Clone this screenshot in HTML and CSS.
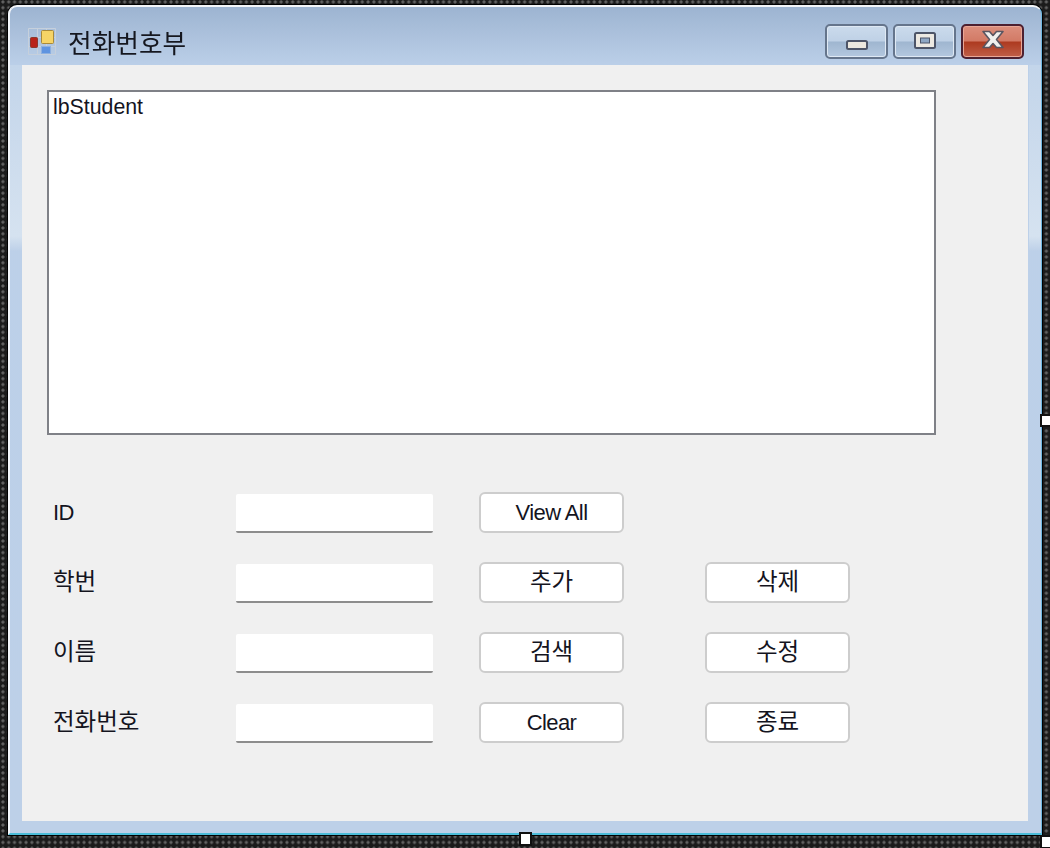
FILE: index.html
```html
<!DOCTYPE html>
<html lang="ko">
<head>
<meta charset="utf-8">
<title>전화번호부</title>
<link rel="stylesheet" href="styles.css">
</head>
<body>
<div class="window">
  <header class="titlebar">
    <svg class="app-icon" width="28" height="27" viewBox="0 0 28 27">
      <path d="M0.500 0.500H27.500V26.500H0.500ZM0.500 9.500H27.500M0.500 18.500H27.500M9.500 0.500V26.500M18.500 0.500V26.500" stroke="#c6d0dc" stroke-width="1" fill="none"/>
      <rect x="2.500" y="9.500" width="7" height="10" rx="1" fill="#b8231a" stroke="#8a3a30"/>
      <rect x="13.500" y="2.500" width="12" height="13" rx="1" fill="#f6d466" stroke="#a98a3a"/>
      <rect x="13.500" y="18.500" width="9" height="7" fill="#5f94e0" stroke="#8db0e0"/>
    </svg>
    <span class="title">전화번호부</span>
    <div class="caption-buttons">
      <div class="cap-btn cap-min">
        <svg width="22" height="10" viewBox="0 0 22 10"><rect x="1" y="1" width="20" height="8" rx="1.500" fill="#ece8df" stroke="#4d5568" stroke-width="2"/></svg>
      </div>
      <div class="cap-btn cap-max">
        <svg width="22" height="17" viewBox="0 0 22 17"><rect x="1" y="1" width="20" height="15" rx="1.500" fill="#ece9e2" stroke="#4d5568" stroke-width="2"/><rect x="6.500" y="6" width="9" height="5" fill="#8ea7c4" stroke="#4d5568"/></svg>
      </div>
      <div class="cap-btn cap-close">
        <svg width="24" height="19" viewBox="0 0 24 19"><path d="M2 1.500H8.500L12 5.500L15.500 1.500H22L15.500 9.500L22 17.500H15.500L12 13.500L8.500 17.500H2L8.500 9.500Z" fill="#f1f0ee" stroke="#5a5560" stroke-width="1.600" stroke-linejoin="round"/></svg>
      </div>
    </div>
  </header>
  <main class="client">
    <div class="listbox">lbStudent</div>
    <div class="form">
      <span class="label latin">ID</span>
      <div class="field"></div>
      <div class="btn btn-a latin">View All</div>
      <div class="spacer"></div>

      <span class="label ko">학번</span>
      <div class="field"></div>
      <div class="btn btn-a ko">추가</div>
      <div class="btn btn-b ko">삭제</div>

      <span class="label ko">이름</span>
      <div class="field"></div>
      <div class="btn btn-a ko">검색</div>
      <div class="btn btn-b ko">수정</div>

      <span class="label ko">전화번호</span>
      <div class="field"></div>
      <div class="btn btn-a latin">Clear</div>
      <div class="btn btn-b ko">종료</div>
    </div>
  </main>
</div>
<div class="handle handle-right"></div>
<div class="handle handle-bottom"></div>
<div class="handle handle-corner"></div>
</body>
</html>
```

FILE: styles.css
```css
* { box-sizing: border-box; }

html, body {
  margin: 0;
  height: 848px;
  overflow: hidden;
}

body {
  position: relative;
  padding: 5px 8px 13px;
  background-color: #1b1b1b;
  background-image: radial-gradient(circle, #636363 1.300px, transparent 1.800px);
  background-size: 5.800px 5.800px;
  background-position: 0 -1px;
  font-family: "Liberation Sans", "Noto Sans CJK KR", sans-serif;
  color: #14141e;
}

.window {
  width: 1034px;
  height: 830px;
  padding: 0 13px 12px 12px;
  display: flex;
  flex-direction: column;
  background:
    linear-gradient(#c3d5ea, #d5e2f0 92%, #bdd0e8) left 58px / 12px 186px no-repeat,
    linear-gradient(#c3d5ea, #d5e2f0 92%, #bdd0e8) right 58px / 12px 186px no-repeat,
    linear-gradient(#9db4d1 0, #bcd0e9 60px, #bdd0e8 100%);
  border-top: 2px solid #f3f5f8;
  border-left: 2px solid #f4f7fb;
  border-right: 1px solid #6fb7e0;
  border-bottom: 2px solid #4bbcd8;
  border-radius: 9px 9px 0 0;
  box-shadow: 0 0 0 1px #000;
  filter: blur(0.450px);
}

.titlebar {
  height: 58px;
  flex: none;
  display: flex;
  align-items: center;
  padding: 11px 4px 0 6px;
}

.app-icon { flex: none; }

.title {
  font-size: 25.700px;
  margin-left: 12px;
  margin-top: -1px;
  color: #15171f;
}

.caption-buttons {
  margin-left: auto;
  display: flex;
  gap: 5px;
}

.cap-btn {
  width: 63px;
  height: 35px;
  display: flex;
  align-items: center;
  justify-content: center;
  border: 2px solid #65758c;
  border-radius: 5px;
  background: linear-gradient(#cbdbec 0, #bfd1e6 48%, #9fb6d0 52%, #b4c8df 100%);
  box-shadow: inset 0 0 0 1px #dfe9f4;
}

.cap-min { padding-top: 6px; }
.cap-max { padding-bottom: 3px; }

.cap-close {
  border-color: #4d2030;
  background: linear-gradient(#dc8f7d 0, #d27a66 48%, #ad3a20 52%, #bf5f48 100%);
  box-shadow: inset 0 0 0 1px #e9a797;
  padding-bottom: 4px;
}

.client {
  flex: 1;
  background: #f0f0f0;
  padding: 25px 25px 0;
}

.listbox {
  width: 889px;
  height: 345px;
  background: #fff;
  border: 2px solid #7f8187;
  padding: 2px 4px;
  font-size: 21.300px;
  line-height: 26px;
}

.form {
  margin-top: 57px;
  display: grid;
  grid-template-columns: 189px 197px 145px 145px;
  grid-auto-rows: 41px;
  row-gap: 29px;
}

.label {
  padding-left: 6px;
  align-self: center;
}

.latin { font-size: 22px; letter-spacing: -0.600px; }
.ko { font-size: 23.500px; }

.label.ko { margin-top: -6px; }

.field {
  height: 39px;
  margin-top: 2px;
  background: #fff;
  border-bottom: 2px solid #8d8d8d;
  border-radius: 2px;
}

.btn {
  display: flex;
  align-items: center;
  justify-content: center;
  background: #fff;
  border: 2px solid #cdcdcd;
  border-radius: 6px;
  width: 145px;
}

.btn.ko { padding-bottom: 6px; }

.btn-a { margin-left: 46px; }
.btn-b { margin-left: 127px; }
.spacer { height: 41px; }

.handle {
  position: absolute;
  background: #fff;
  border: 2px solid #101010;
}

.handle-right { left: 1040px; top: 414px; width: 14px; height: 13px; }
.handle-bottom { left: 519px; top: 832px; width: 13px; height: 14px; }
.handle-corner { left: 1040px; top: 835px; width: 14px; height: 14px; }
```
